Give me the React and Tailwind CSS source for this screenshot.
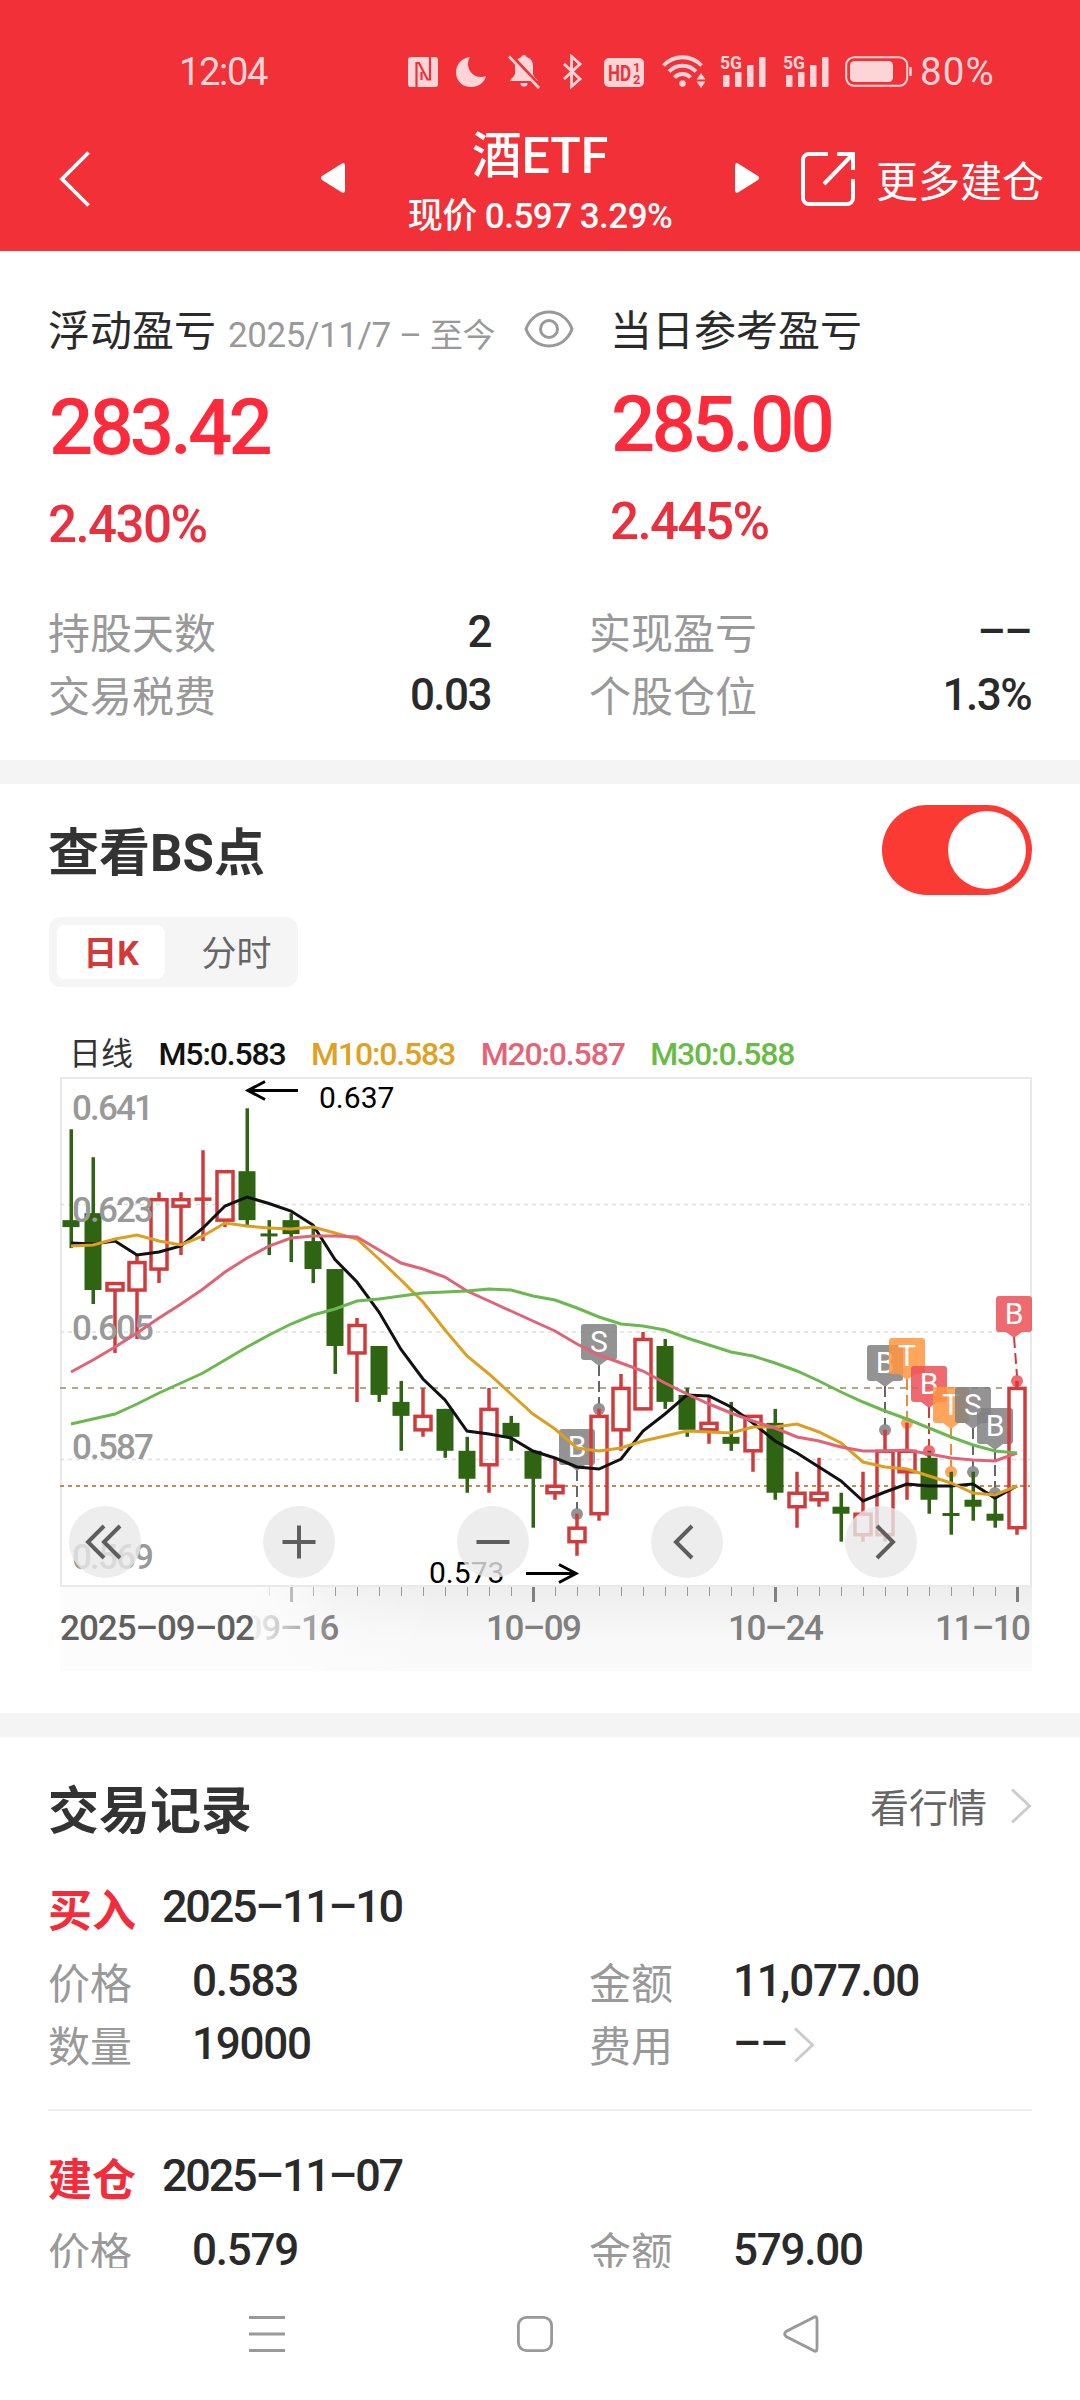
import React, { useState } from 'react';
import clsx from 'clsx';

// Chart geometry
const STEP = 22;
const FIRST_X = 11;
const TOP_Y = 1077;
const CHART_W = 972;
const CHART_H = 508;

const xAt = (i) => FIRST_X + i * STEP;
const priceY = (p) => 31.3 + (637 - p) * 6.99;

// [open, high, low, close] in thousandths
const CANDLES = [
  [621, 634, 617, 620], [622, 630, 609, 611], [611, 612, 602, 612], [611, 616, 604, 615],
  [614, 625, 612, 624], [623, 625, 616, 624], [624, 631, 618, 624], [621, 628, 620, 628],
  [628, 637, 620, 621], [619.1, 621, 616, 618.9], [621, 622, 615, 619], [618, 620, 612, 614],
  [614, 614, 599, 603], [602, 607, 595, 606], [603, 603, 595, 596], [595, 598, 588, 593],
  [591, 597, 590, 593], [594, 594, 587, 588], [588, 590, 582, 584], [586, 597, 582, 594],
  [592, 593, 588, 590], [588, 588, 577, 584], [582, 587, 581, 583], [575, 579, 573, 577],
  [579, 594, 578, 593], [591, 599, 588, 597], [594, 605, 594, 604], [603, 604, 594, 595],
  [596, 597, 590, 591], [591, 596, 589, 592], [590, 595, 588, 589], [588, 593, 585, 593],
  [592, 594, 581, 582], [580, 585, 577, 582], [581, 587, 580, 582], [580, 582, 575, 579],
  [576, 585, 575, 579], [576, 591, 575, 588], [585, 592, 581, 588], [587, 588, 579, 581],
  [579.1, 585, 576, 578.9], [581, 585, 578, 580], [579, 582, 577, 578], [577, 598, 576, 597],
];

const AVERAGES = [
  {
    label: 'M5:0.583',
    color: '#111111',
    text: 'text-[#111]',
    ys: [1243, 1244, 1241, 1255, 1252, 1246, 1228, 1206, 1197, 1203.5, 1211, 1225, 1259.5, 1282, 1312, 1349.5, 1379, 1400, 1431, 1434, 1438, 1451, 1458, 1467, 1469, 1459, 1431, 1414, 1395, 1396, 1407, 1423, 1441, 1453, 1467, 1481, 1501, 1492, 1484, 1486, 1486, 1484, 1498, 1486],
  },
  {
    label: 'M10:0.583',
    color: '#dd9f22',
    text: 'text-[#e0a022]',
    ys: [1246, 1245, 1239, 1235, 1241, 1245, 1236, 1223, 1226, 1228, 1229, 1227, 1233, 1239, 1259, 1280, 1302, 1330, 1356, 1374, 1394, 1414, 1429, 1448, 1451, 1448, 1441, 1436, 1431, 1432, 1433, 1427, 1427, 1424, 1432, 1443, 1462, 1467, 1469, 1476, 1483, 1493, 1495, 1486],
  },
  {
    label: 'M20:0.587',
    color: '#e06377',
    text: 'text-[#e46377]',
    ys: [1372, 1360, 1347, 1333, 1318, 1304, 1289, 1272, 1258, 1246, 1238, 1236, 1236, 1237, 1250, 1263, 1269, 1277, 1291, 1301, 1311, 1321, 1331, 1344, 1355, 1363, 1371, 1383, 1394, 1404, 1413, 1421, 1428, 1437, 1441, 1447, 1451, 1451, 1450, 1454, 1458, 1460, 1461, 1453],
  },
  {
    label: 'M30:0.588',
    color: '#6cb850',
    text: 'text-[#69bb47]',
    ys: [1424, 1419, 1414, 1404, 1393, 1383, 1373, 1360, 1347, 1335, 1324, 1315, 1309, 1301, 1299, 1296, 1293, 1292, 1291, 1289, 1290, 1296, 1300, 1308, 1317, 1324, 1326, 1330, 1338, 1345, 1352, 1356, 1363, 1371, 1381, 1392, 1402, 1411, 1419, 1428, 1437, 1445, 1451, 1453],
  },
];

const GRAY = '#808080';
const ORANGE = '#ff9540';
const RED = '#ec5055';

// Buy / sell / T markers, y is the top of the flag
const MARKERS = [
  { i: 23, y: 352, dot: 437, text: 'B', color: GRAY, line: '#666' },
  { i: 24, y: 247, dot: 332, text: 'S', color: GRAY, line: '#666' },
  { i: 37, y: 268, dot: 353, text: 'B', color: GRAY, line: '#666' },
  { i: 38, y: 261, dot: 346, text: 'T', color: ORANGE, line: '#f08a30' },
  { i: 39, y: 289, dot: 374, text: 'B', color: RED, line: '#d03a3c' },
  { i: 40, y: 310, dot: 395, text: 'T', color: ORANGE, line: '#f08a30' },
  { i: 41, y: 310, dot: 395, text: 'S', color: GRAY, line: '#666' },
  { i: 42, y: 331, dot: 416, text: 'B', color: GRAY, line: '#666' },
  { i: 43, y: 219, dot: 304, text: 'B', color: RED, line: '#d03a3c', shift: -3 },
];

const Y_LABELS = [
  ['0.641', 43],
  ['0.623', 145],
  ['0.605', 263],
  ['0.587', 382],
  ['0.569', 492],
];

const TRADES = [
  { type: '买入', date: '2025–11–10', price: '0.583', amount: '11,077.00', count: '19000', fee: '––' },
  { type: '建仓', date: '2025–11–07', price: '0.579', amount: '579.00', count: '1000', fee: '––' },
];

const Signal = ({ className }) => (
  <svg className={className} width="46" height="36" viewBox="0 0 46 36" fill="currentColor">
    <text x="0" y="15" fontSize="19" fontWeight="700" textLength="22" lengthAdjust="spacingAndGlyphs">5G</text>
    <rect x="3" y="21" width="6.5" height="12" rx="1" />
    <rect x="15" y="18" width="6.5" height="15" rx="1" />
    <rect x="27" y="11" width="6.5" height="22" rx="1" />
    <rect x="39" y="3" width="6.5" height="30" rx="1" />
  </svg>
);

const StatusBar = () => (
  <div className="h-[120px] pt-[54px] pl-[179px] flex items-start text-[#fdd5d7]">
    <span className="w-[229px] h-[36px] text-[38px] leading-[36px] tracking-[-0.035em]">12:04</span>
    {/* NFC */}
    <svg width="30" height="36" viewBox="0 0 30 36">
      <rect y="3" width="30" height="30" rx="3" fill="currentColor" />
      <path d="M8.500 33V9H11l8.500 16.500H22V3M13.500 26v-8" fill="none" stroke="#f13038" strokeWidth="2.200" />
    </svg>
    {/* Do not disturb */}
    <svg className="ml-[18px]" width="30" height="36" viewBox="0 0 30 36">
      <path d="M14 3C6 4 0 10 0 18.500 0 27 6.500 33 15 33c7.500 0 13.500-4.500 15-11-8 3.500-18-2-18-12 0-2.600.8-5 2-7z" fill="currentColor" />
    </svg>
    {/* Muted */}
    <svg className="ml-[22px]" width="32" height="36" viewBox="0 0 32 36">
      <path d="M16 1c1.600 0 2.400 1 2.600 2 4.600 1.500 6.400 5 6.400 9v8c0 3 4 4.500 5 7H2c.5-3 5-4 5-8v-7c0-4 2-7.500 6.400-9 .2-1 1-2 2.600-2zM12.500 29h7a3.500 3.500 0 0 1-7 0z" fill="currentColor" />
      <path d="M2.500 1L32 32.500" stroke="#f13038" strokeWidth="4" />
      <path d="M1 2.500L31 34" stroke="currentColor" strokeWidth="2.600" />
    </svg>
    {/* Bluetooth */}
    <svg className="ml-[22px]" width="21" height="36" viewBox="0 0 21 36">
      <path d="M2 10l16 15-8.500 7.500V2.500L18 10 2 25" fill="none" stroke="currentColor" strokeWidth="2.800" />
    </svg>
    {/* HD */}
    <svg className="ml-[21px]" width="40" height="36" viewBox="0 0 40 36">
      <rect y="4" width="40" height="29" rx="5" fill="currentColor" />
      <g fill="#f13038" fontWeight="700">
        <text x="4" y="27" fontSize="22" textLength="23" lengthAdjust="spacingAndGlyphs">HD</text>
        <text x="29" y="17.500" fontSize="13">1</text>
        <text x="29" y="30" fontSize="13">2</text>
      </g>
    </svg>
    {/* Wifi */}
    <svg className="ml-[18px]" width="44" height="36" viewBox="0 0 44 36">
      <g fill="none" stroke="currentColor" strokeWidth="4">
        <path d="M1.500 11.500a26 26 0 0 1 38 0" />
        <path d="M7 17.500a18.500 18.500 0 0 1 27 0" />
        <path d="M12.500 23.500a11 11 0 0 1 16 0" />
      </g>
      <circle cx="20.500" cy="29.500" r="3.200" fill="currentColor" />
      <path d="M34.500 25.500l4.500-6.500 4.500 6.500zM34.500 27.500l4.500 6.500 4.500-6.500z" fill="currentColor" />
    </svg>
    <Signal className="ml-[14px]" />
    <Signal className="ml-[17px]" />
    {/* Battery */}
    <svg className="ml-[16px]" width="67" height="36" viewBox="0 0 67 36">
      <rect x="1.200" y="3.200" width="61" height="28.600" rx="8" fill="none" stroke="currentColor" strokeWidth="2" />
      <rect x="5" y="7" width="43" height="21" rx="4.500" fill="currentColor" />
      <path d="M65.500 13v9" stroke="currentColor" strokeWidth="2.400" />
    </svg>
    <span className="ml-[8px] h-[36px] text-[38.500px] leading-[36px] tracking-[0.03em]">80%</span>
  </div>
);

const Header = () => (
  <header className="h-[251px] bg-[#f13038] text-white">
    <StatusBar />
    <div className="h-[131px] flex items-start">
      <button className="w-[320px] pl-[59px] pt-[31px]">
        <svg width="32" height="56" viewBox="0 0 32 56" fill="none" stroke="currentColor" strokeWidth="3.800">
          <path d="M29.500 1.500L3 28l26.500 26.500" />
        </svg>
      </button>
      <svg className="mt-[42px]" width="26" height="32" viewBox="0 0 26 32" fill="currentColor">
        <path d="M22 1.500Q25 0 25 4v24q0 4-3 2.500L2 18q-2-2 0-4z" />
      </svg>
      <div className="w-[388px] flex flex-col items-center">
        <div className="mt-[10px] text-[50px] leading-[52px] font-medium">酒ETF</div>
        <div className="mt-[17px] text-[35px] leading-[36px] font-medium tracking-[-0.015em]">现价 0.597 3.29%</div>
      </div>
      <svg className="mt-[42px]" width="26" height="32" viewBox="0 0 26 32" fill="currentColor">
        <path d="M4 1.500Q1 0 1 4v24q0 4 3 2.500L24 18q2-2 0-4z" />
      </svg>
      <svg className="ml-[40px] mt-[31px]" width="56" height="56" viewBox="0 0 56 56" fill="none" stroke="currentColor" strokeWidth="4">
        <path d="M28 3H9a6 6 0 0 0-6 6v38a6 6 0 0 0 6 6h38a6 6 0 0 0 6-6V28" />
        <path d="M37 3h16v16M53 3L24 33" />
      </svg>
      <span className="ml-[20px] mt-[42px] text-[42px] leading-[42px]">更多建仓</span>
    </div>
  </header>
);

const Stat = ({ label, value }) => (
  <div className="h-[63px] flex items-center justify-between">
    <span className="text-[42px] leading-none text-[#999] pt-[3px]">{label}</span>
    <span className="text-[44px] leading-none font-medium tracking-[-0.035em] text-[#2a2a2a] pb-[3px]">{value}</span>
  </div>
);

const Summary = () => (
  <section className="h-[509px] pl-[48px] pr-[48px] pt-[57px]">
    <div className="flex">
      <div className="w-[562px]">
        <div className="h-[48px] flex items-center leading-none">
          <span className="text-[42px] text-[#2a2a2a]">浮动盈亏</span>
          <span className="ml-[12px] mt-[6px] text-[35px] text-[#999] tracking-[-0.012em]">
            2025/11/7 – <span className="text-[33px]">至今</span>
          </span>
          <svg className="ml-[29px] mb-[6px]" width="50" height="38" viewBox="0 0 50 38" fill="none" stroke="#999" strokeWidth="3">
            <path d="M2 19C6 8 15 2 25 2s19 6 23 17c-4 11-13 17-23 17S6 30 2 19z" />
            <circle cx="25" cy="19" r="8.500" />
          </svg>
        </div>
        <div className="mt-[33px] ml-px text-[78px] leading-[78px] font-medium tracking-[-0.05em] text-[#fc2a3b]">283.42</div>
        <div className="mt-[32px] text-[51px] leading-[52px] font-medium tracking-[-0.03em] text-[#e9303e]">2.430%</div>
      </div>
      <div>
        <div className="h-[48px] flex items-center text-[42px] leading-none text-[#2a2a2a]">当日参考盈亏</div>
        <div className="mt-[30px] ml-px text-[78px] leading-[78px] font-medium tracking-[-0.05em] text-[#fc2a3b]">285.00</div>
        <div className="mt-[32px] text-[51px] leading-[52px] font-medium tracking-[-0.03em] text-[#e9303e]">2.445%</div>
      </div>
    </div>
    <div className="mt-[51px] grid grid-cols-[443px_442px] gap-x-[98px]">
      <Stat label="持股天数" value="2" />
      <Stat label="实现盈亏" value="––" />
      <Stat label="交易税费" value="0.03" />
      <Stat label="个股仓位" value="1.3%" />
    </div>
  </section>
);

const Candle = ({ i, data }) => {
  const [open, high, low, close] = data;
  const x = xAt(i);
  const top = priceY(Math.max(open, close));
  const bottom = priceY(Math.min(open, close));

  if (close < open) {
    return (
      <g fill="#2f6413">
        <rect x={x - 1.5} y={priceY(high)} width="3.500" height={priceY(low) - priceY(high)} />
        <rect x={x - 8.5} y={top} width="17" height={Math.max(bottom - top, 3)} />
      </g>
    );
  }
  return (
    <g stroke="#d23b3b" strokeWidth="3.500" fill="none">
      <path d={`M${x} ${priceY(high)}V${top}M${x} ${bottom}V${priceY(low)}`} />
      {open === close ? (
        <path d={`M${x - 8.5} ${top}h17`} />
      ) : (
        <rect x={x - 8} y={top + 0.5} width="16" height={bottom - top - 0.5} />
      )}
    </g>
  );
};

const Marker = ({ i, y, dot, text, color, line, shift = 0 }) => {
  const x = xAt(i);
  const cx = x + shift;
  return (
    <g>
      <path d={`M${cx} ${y + 41}L${x} ${dot - 5}`} stroke={line} strokeWidth="2" strokeDasharray="11 5" />
      <circle cx={x} cy={dot} r="6" fill={color} fillOpacity="0.85" />
      <g fill={color} fillOpacity="0.85">
        <rect x={cx - 18} y={y} width="36" height="36" rx="3" />
        <path d={`M${cx - 8} ${y + 36}h16l-8 6z`} />
      </g>
      <text x={cx} y={y + 28} fontSize="30" textAnchor="middle" fill="#fff">{text}</text>
    </g>
  );
};

const KLineChart = () => (
  <svg className="block" width={CHART_W} height="594" viewBox={`0 0 ${CHART_W} 594`}>
    <defs>
      <linearGradient id="axis" x1="0" y1="0" x2="0" y2="1">
        <stop offset="0" stopColor="#ededed" />
        <stop offset="0.600" stopColor="#f8f8f8" />
        <stop offset="1" stopColor="#fafafa" />
      </linearGradient>
      <linearGradient id="edge">
        <stop offset="0" stopColor="#fff" />
        <stop offset="1" stopColor="#fff" stopOpacity="0" />
      </linearGradient>
      <linearGradient id="fade">
        <stop offset="0" stopColor="#fcfcfc" />
        <stop offset="0.700" stopColor="#fcfcfc" stopOpacity="0.920" />
        <stop offset="1" stopColor="#fcfcfc" stopOpacity="0" />
      </linearGradient>
    </defs>

    {/* Time axis */}
    <rect y={CHART_H} width={CHART_W} height="86" fill="url(#axis)" />
    <rect y={CHART_H} width="380" height="86" fill="url(#edge)" />
    {CANDLES.map((_, i) => {
      const major = i === 10 || i === 21 || i === 32 || i === 43;
      return i > 8 && (
        <rect key={i} x={xAt(i) - (major ? 1 : 0)} y={CHART_H + 2} width={major ? 3 : 1} height={major ? 15 : 9} fill={major ? '#808080' : '#999'} />
      );
    })}
    <g fontSize="35" fontWeight="500" fill="#808080" textAnchor="middle">
      <text x="231" y="563" textLength="97">09–16</text>
      <text x="474" y="563" textLength="96">10–09</text>
      <text x="716" y="563" textLength="96">10–24</text>
      <text x="923" y="563" textLength="96">11–10</text>
    </g>
    <rect y={CHART_H + 2} width="275" height="84" fill="url(#fade)" />
    <text x="0" y="563" fontSize="35" fontWeight="500" fill="#606060" textLength="195">2025–09–02</text>

    {/* Frame and grid */}
    <rect x="1" y="1" width="970" height={CHART_H} fill="#fff" stroke="#e9e9e9" strokeWidth="2" />
    {[127.5, 255, 382.5].map((y) => (
      <path key={y} d={`M0 ${y}H970`} stroke="#dfdfdf" strokeWidth="1.500" strokeDasharray="4 4" />
    ))}
    <path d="M0 311H970" stroke="#b9a582" strokeWidth="2" strokeDasharray="6 6" />
    <path d="M0 409H970" stroke="#c08a50" strokeWidth="2" strokeDasharray="4 4" />

    {MARKERS.map((m) => <Marker key={m.i} {...m} />)}
    {CANDLES.map((data, i) => <Candle key={i} i={i} data={data} />)}

    <g fontSize="35" fontWeight="500" fill="#999">
      {Y_LABELS.map(([label, y]) => (
        <text key={label} x="12" y={y} textLength="82">{label}</text>
      ))}
    </g>

    {AVERAGES.map(({ label, color, ys }) => (
      <polyline
        key={label}
        points={ys.map((y, i) => `${xAt(i)},${y - TOP_Y}`).join(' ')}
        fill="none"
        stroke={color}
        strokeWidth="3"
      />
    ))}

    {/* High and low */}
    <g fontSize="30" fill="#000">
      <text x="259" y="31">0.637</text>
      <text x="369" y="506">0.573</text>
    </g>
    <g fill="none" stroke="#000" strokeWidth="3">
      <path d="M238 13.500H188M205 4.500l-17 9 17 9" />
      <path d="M466 496.500h50M499 487.500l17 9-17 9" />
    </g>
  </svg>
);

const CONTROLS = [
  { id: 'first', d: 'M35 20L19 36l16 16M51 20L35 36l16 16' },
  { id: 'zoomIn', d: 'M19.500 36h33M36 19.500v33' },
  { id: 'zoomOut', d: 'M19.500 36h33' },
  { id: 'prev', d: 'M41 20L25 36l16 16' },
  { id: 'next', d: 'M32 20l16 16-16 16' },
];

const ChartPanel = () => {
  const [enabled, setEnabled] = useState(true);
  const [tab, setTab] = useState('day');

  return (
    <section className="h-[929px] pl-[49px] pr-[48px] pt-[21px]">
      <div className="h-[90px] flex items-center justify-between">
        <h2 className="-ml-px pt-[7px] text-[51px] leading-none font-bold text-[#333]">查看BS点</h2>
        <button
          onClick={() => setEnabled(!enabled)}
          className={clsx('w-[150px] h-[90px] p-[6px] rounded-full flex', enabled ? 'bg-[#fb3b33] justify-end' : 'bg-gray-300')}
        >
          <span className="size-[78px] rounded-full bg-white" />
        </button>
      </div>

      <div className="mt-[22px] w-[249px] h-[70px] p-2 rounded-xl bg-[#f5f5f5] flex text-[35px] leading-none">
        <button
          onClick={() => setTab('day')}
          className={clsx('w-[108px] pt-[2px] rounded-lg text-[34px]', tab === 'day' ? 'bg-white font-bold text-[#d43939]' : 'text-[#666]')}
        >
          日K
        </button>
        <button
          onClick={() => setTab('minute')}
          className={clsx('flex-1 pl-[18px] pt-[4px] rounded-lg', tab === 'minute' ? 'bg-white font-bold text-[#d43939]' : 'text-[#666]')}
        >
          分时
        </button>
      </div>

      <div className="mt-[48px] ml-[20px] h-[38px] flex items-center gap-[25.500px] text-[32px] leading-none tracking-[-0.036em] font-medium">
        <span className="font-normal text-[#333] tracking-normal">日线</span>
        {AVERAGES.map(({ label, text }) => (
          <span key={label} className={text}>{label}</span>
        ))}
      </div>

      <div className="relative mt-[4px] ml-[11px] w-[972px]">
        <KLineChart />
        <div className="absolute left-[9px] top-[429px] flex gap-[122px]">
          {CONTROLS.map(({ id, d }) => (
            <button key={id} className="size-[72px] rounded-full bg-[#e8e8e8]/80">
              <svg width="72" height="72" viewBox="0 0 72 72" fill="none" stroke="#5e5e5e" strokeWidth="4">
                <path d={d} />
              </svg>
            </button>
          ))}
        </div>
      </div>
    </section>
  );
};

const Chevron = ({ className }) => (
  <svg className={className} width="22" height="36" viewBox="0 0 22 36" fill="none" stroke="#ccc" strokeWidth="3">
    <path d="M2 1.500L19.500 18 2 34.500" />
  </svg>
);

const Field = ({ label, value, arrow }) => (
  <div className="h-[63px] flex items-center leading-none">
    <span className="w-[144px] text-[42px] text-[#999]">{label}</span>
    <span className="text-[44px] font-medium tracking-[-0.028em] text-[#2a2a2a] pb-[7px]">{value}</span>
    {arrow && <Chevron className="ml-[6px] mb-[6px]" />}
  </div>
);

const Trade = ({ trade }) => (
  <div className="h-[230px] mb-[39px] border-b-2 border-[#eee]">
    <div className="h-[58px] flex items-center leading-none">
      <span className="w-[114px] pt-[4px] text-[44px] font-bold text-[#f32c3b]">{trade.type}</span>
      <span className="text-[45px] text-[#2a2a2a] tracking-[-0.05em] font-medium pb-[7px]">{trade.date}</span>
    </div>
    <div className="mt-[14px] grid grid-cols-[541px_443px]">
      <Field label="价格" value={trade.price} />
      <Field label="金额" value={trade.amount} />
      <Field label="数量" value={trade.count} />
      <Field label="费用" value={trade.fee} arrow />
    </div>
  </div>
);

const Trades = () => (
  <section className="h-[531px] overflow-hidden pl-[48px] pr-[48px]">
    <div className="h-[144px] flex items-center leading-none">
      <h2 className="flex-1 pt-[5px] text-[51px] font-bold text-[#333]">交易记录</h2>
      <span className="text-[39px] text-[#666]">看行情</span>
      <Chevron className="ml-[23px] mb-[6px]" />
    </div>
    {TRADES.map((trade) => <Trade key={trade.date} trade={trade} />)}
  </section>
);

const NavBar = () => (
  <nav className="h-[132px] pt-[47px] pl-[248px] flex items-start bg-white">
    <svg width="38" height="38" viewBox="0 0 38 38" stroke="#999" strokeWidth="3">
      <path d="M1 2.500h36M1 19h36M1 35.500h36" />
    </svg>
    <svg className="ml-[230px]" width="38" height="38" viewBox="0 0 38 38" fill="none" stroke="#999" strokeWidth="2.800">
      <rect x="2.400" y="2.400" width="33.200" height="33.200" rx="8" />
    </svg>
    <svg className="ml-[229px]" width="36" height="38" viewBox="0 0 36 38" fill="none" stroke="#999" strokeWidth="2.800">
      <path d="M30.500 2.500Q34 0 34 5v28q0 5-3.500 2.500L3 21.500q-2.500-2.500 0-5z" />
    </svg>
  </nav>
);

export default function App() {
  return (
    <div className="w-[1080px] h-[2400px] overflow-hidden bg-white font-[Roboto,'Noto_Sans_CJK_SC',sans-serif]">
      <Header />
      <Summary />
      <div className="h-6 bg-[#f4f4f4]" />
      <ChartPanel />
      <div className="h-6 bg-[#f4f4f4]" />
      <Trades />
      <NavBar />
    </div>
  );
}
